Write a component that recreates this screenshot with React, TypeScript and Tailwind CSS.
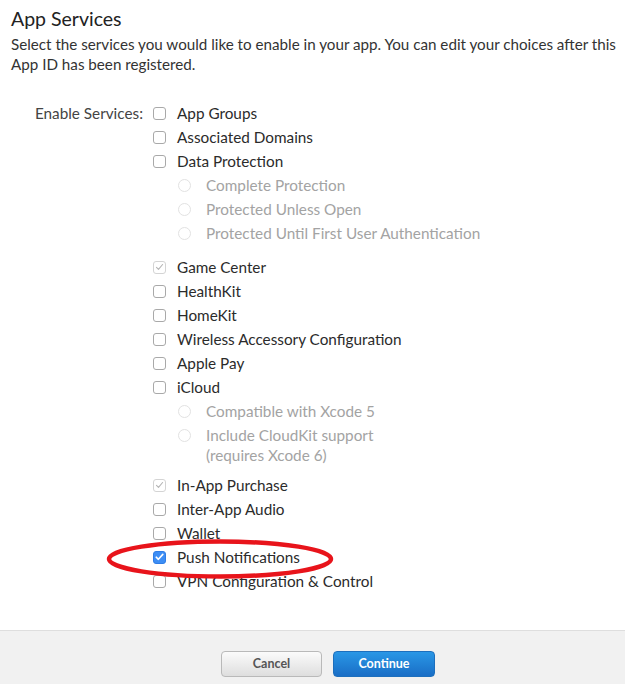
import React from "react";

type Item =
  | { kind: "check"; label: string; state?: "off" | "disabled" | "on"; gapAfter?: string }
  | { kind: "radio"; label: string[]; gapAfter?: string };

const items: Item[] = [
  { kind: "check", label: "App Groups" },
  { kind: "check", label: "Associated Domains" },
  { kind: "check", label: "Data Protection" },
  { kind: "radio", label: ["Complete Protection"] },
  { kind: "radio", label: ["Protected Unless Open"] },
  { kind: "radio", label: ["Protected Until First User Authentication"], gapAfter: "mb-[10px]" },
  { kind: "check", label: "Game Center", state: "disabled" },
  { kind: "check", label: "HealthKit" },
  { kind: "check", label: "HomeKit" },
  { kind: "check", label: "Wireless Accessory Configuration" },
  { kind: "check", label: "Apple Pay" },
  { kind: "check", label: "iCloud" },
  { kind: "radio", label: ["Compatible with Xcode 5"] },
  { kind: "radio", label: ["Include CloudKit support", "(requires Xcode 6)"], gapAfter: "mb-[6px]" },
  { kind: "check", label: "In-App Purchase", state: "disabled" },
  { kind: "check", label: "Inter-App Audio" },
  { kind: "check", label: "Wallet" },
  { kind: "check", label: "Push Notifications", state: "on" },
  { kind: "check", label: "VPN Configuration & Control" },
];

const Box = ({ state = "off" }: { state?: "off" | "disabled" | "on" }) => {
  if (state === "on") {
    return (
      <span className="w-[13px] h-[13px] rounded-[3px] bg-[#3d8ef5] border border-[#2f7de6] flex items-center justify-center shrink-0">
        <svg width="9" height="8" viewBox="0 0 9 8">
          <path d="M1.2 4.2 L3.4 6.3 L7.8 1.4" fill="none" stroke="#fff" strokeWidth="1.6" strokeLinecap="round" strokeLinejoin="round" />
        </svg>
      </span>
    );
  }
  return (
    <span className={`w-[13px] h-[13px] rounded-[3px] border bg-white flex items-center justify-center shrink-0 ${state === "disabled" ? "border-[#d4d4d4]" : "border-[#a9a9a9]"}`}>
      {state === "disabled" && (
        <svg width="9" height="8" viewBox="0 0 9 8">
          <path d="M1.5 4.3 L3.5 6.3 L7.6 1.5" fill="none" stroke="#b5b5b5" strokeWidth="1.1" strokeLinecap="round" strokeLinejoin="round" />
        </svg>
      )}
    </span>
  );
};

export default function App() {
  return (
    <div className="w-[625px] h-[684px] bg-white flex flex-col text-[#2b2b2b] font-['Lato','Open_Sans',sans-serif] relative overflow-hidden">
      <div className="flex-1 pl-[11px] pr-[2px] pt-[6px]">
        <h1 className="text-[19.5px] leading-[26px] text-[#222]">App Services</h1>
        <p className="text-[15.2px] leading-[20px] mt-[2px] text-[#333]">
          Select the services you would like to enable in your app. You can edit your choices after this App ID has been registered.
        </p>

        <div className="flex mt-[27px] text-[15.3px] leading-[20px]">
          <div className="w-[142px] pr-[10px] text-right text-[#444] py-[2px] shrink-0">Enable Services:</div>
          <div className="flex flex-col">
            {items.map((it, i) =>
              it.kind === "check" ? (
                <div key={i} className={`flex items-center h-[24px] ${it.gapAfter ?? ""}`}>
                  <Box state={it.state} />
                  <span className="ml-[11px] text-[#2b2b2b]">{it.label}</span>
                </div>
              ) : (
                <div key={i} className={`flex items-start py-[2px] pl-[25px] ${it.gapAfter ?? ""}`}>
                  <span className="mt-[4px] w-[13px] h-[13px] rounded-full border border-[#e2e2e2] bg-white shrink-0" />
                  <span className="ml-[15px] text-[#a3a3a3] flex flex-col">
                    {it.label.map((l) => (
                      <span key={l}>{l}</span>
                    ))}
                  </span>
                </div>
              )
            )}
          </div>
        </div>
      </div>

      <div className="h-[54px] border-t border-[#dedede] bg-[#f1f1f1] flex items-start justify-center gap-[11px] pt-[20px] pl-[31px] shrink-0">
        <button className="w-[101px] h-[26px] rounded-[4px] border border-[#b9b9b9] bg-gradient-to-b from-[#fbfbfb] to-[#dedede] text-[12.5px] font-bold text-[#555]">
          Cancel
        </button>
        <button className="w-[102px] h-[26px] rounded-[4px] border border-[#1d6fbd] bg-gradient-to-b from-[#2a97e6] to-[#1a6ec6] text-[12.5px] font-bold text-white">
          Continue
        </button>
      </div>

      <svg className="absolute left-[104px] top-[537px] pointer-events-none" width="232" height="44" viewBox="0 0 232 44">
        <ellipse cx="116" cy="22" rx="111" ry="17.5" fill="none" stroke="#e8141b" strokeWidth="4.5" />
      </svg>
    </div>
  );
}
